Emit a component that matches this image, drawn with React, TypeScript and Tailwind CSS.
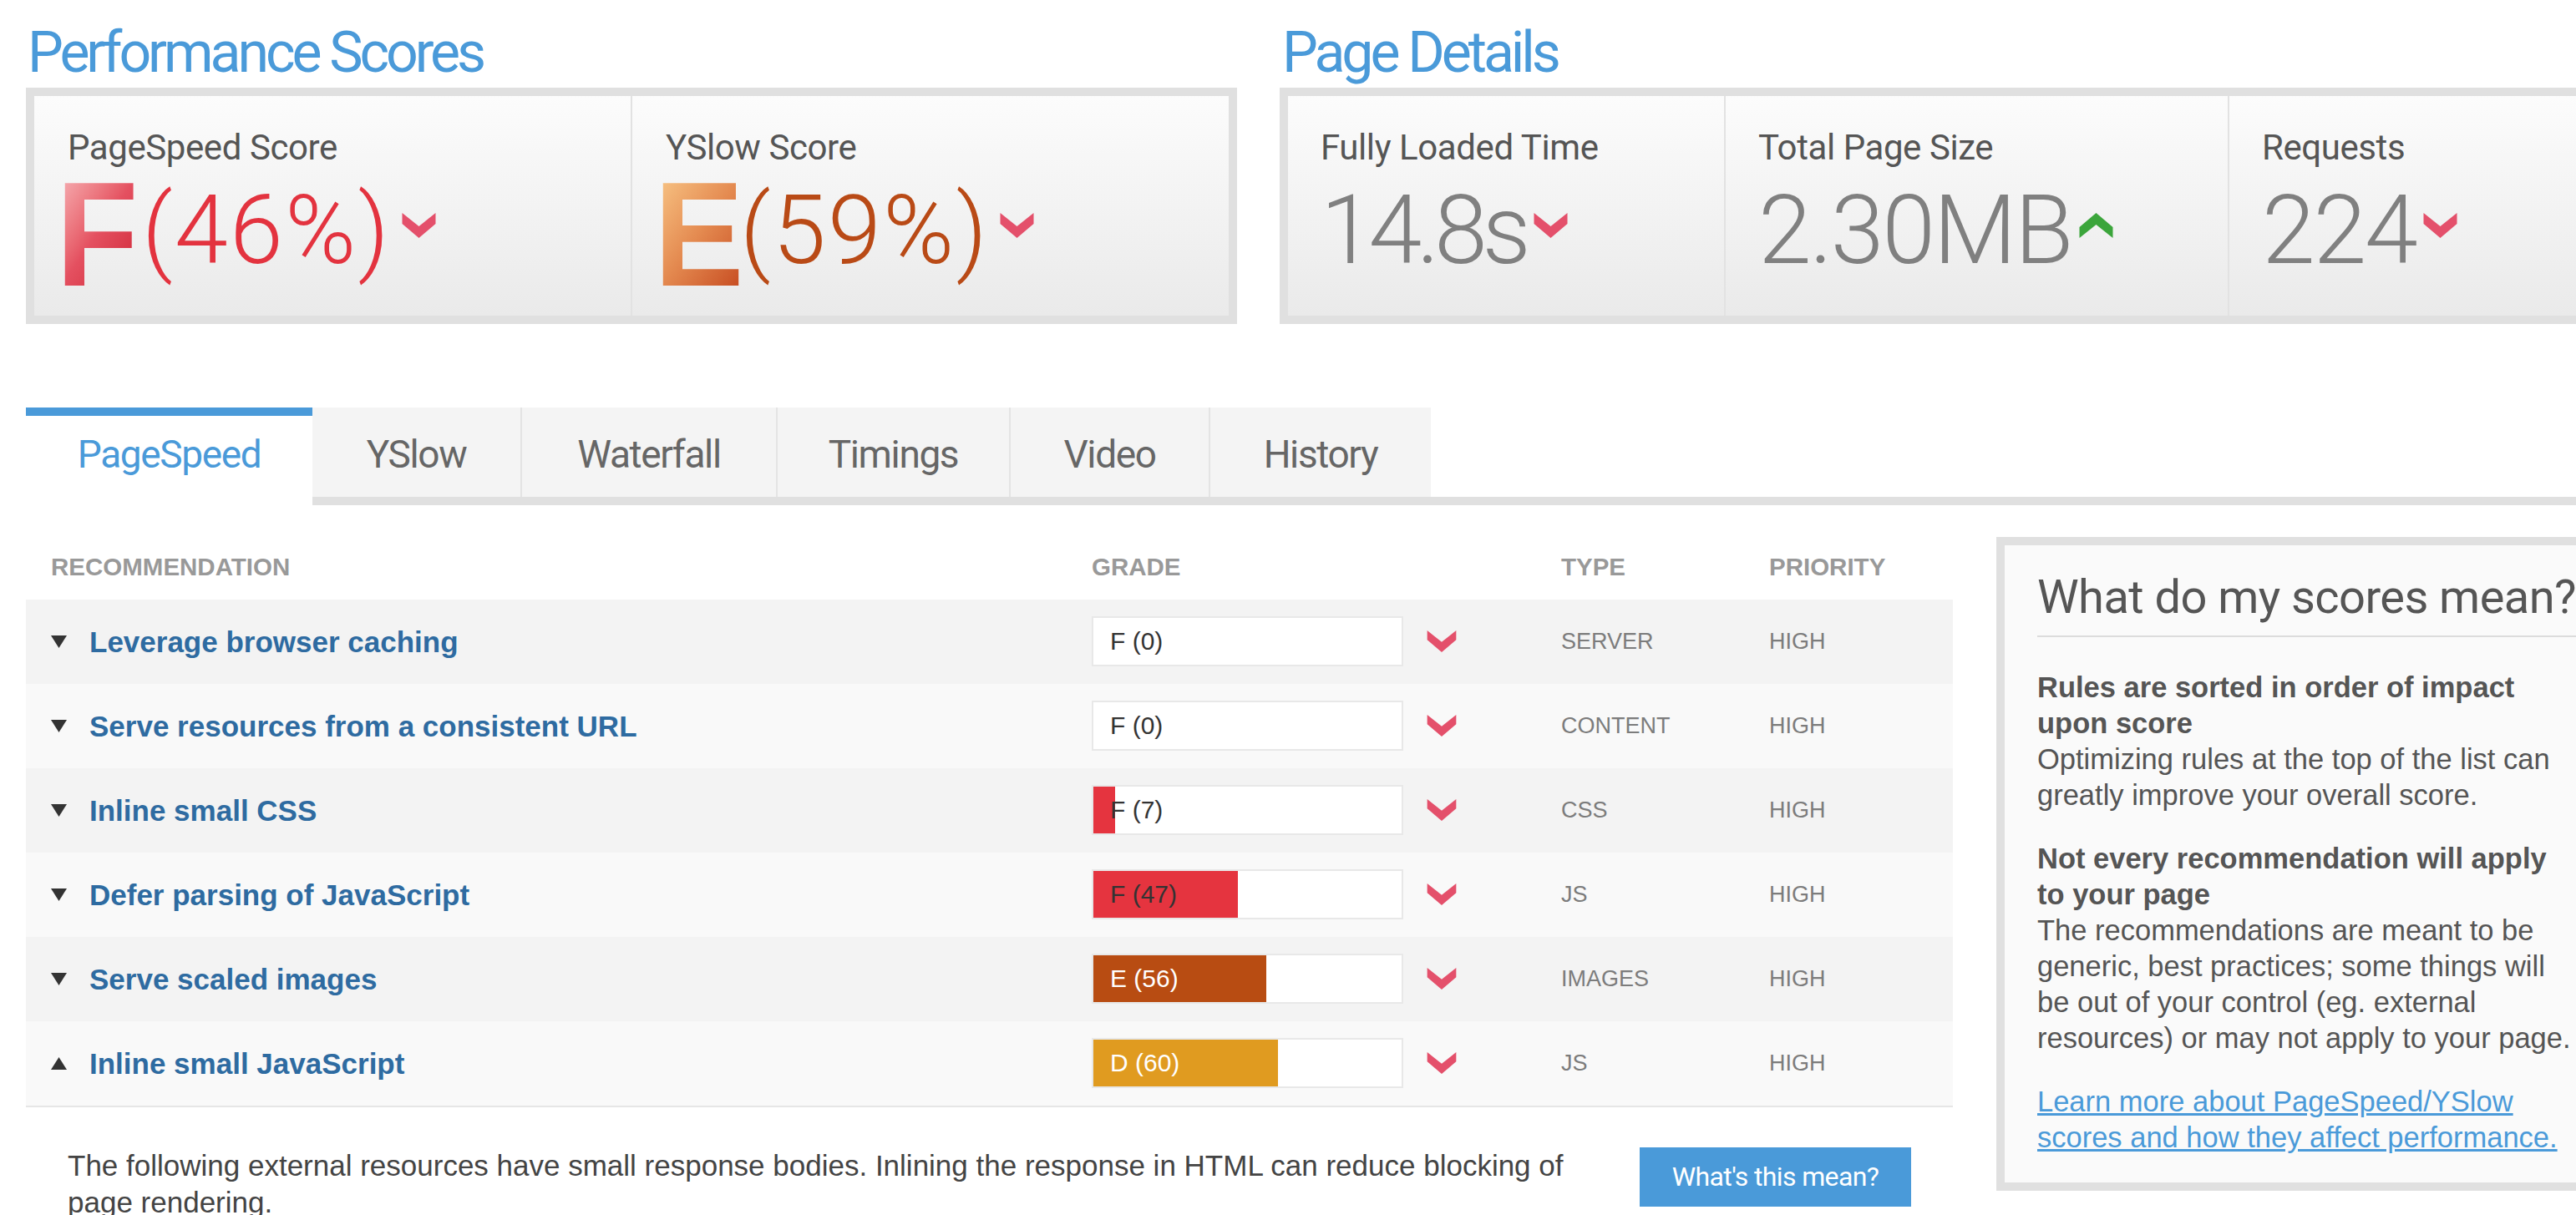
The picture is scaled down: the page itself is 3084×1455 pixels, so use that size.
import React from 'react';

const ROBOTO = "font-['Roboto','Open_Sans',sans-serif]";
const ARIAL = "font-['Liberation_Sans',Arial,sans-serif]";

function Chevron({ up = false, className = '' }: { up?: boolean; className?: string }) {
  return (
    <svg viewBox="0 0 40 30" className={className}>
      {up ? (
        <polygon points="0,30 20,14 40,30 40,17 20,0 0,17" fill="#3ba53b" />
      ) : (
        <polygon points="0,0 20,16 40,0 40,13 20,30 0,13" fill="#e4506b" />
      )}
    </svg>
  );
}

function Triangle({ up = false }: { up?: boolean }) {
  return (
    <svg viewBox="0 0 19 15" className="w-[19px] h-[15px]">
      <polygon points={up ? '0,15 19,15 9.5,0' : '0,0 19,0 9.5,15'} fill="#333" />
    </svg>
  );
}

function ScoreCell({
  label,
  letter,
  value,
  letterClass,
  valueClass,
  divider,
}: {
  label: string;
  letter: string;
  value: string;
  letterClass: string;
  valueClass: string;
  divider?: boolean;
}) {
  return (
    <div className={`flex-1 pl-[40px] pt-[41px] ${divider ? 'border-l-2 border-[#e2e2e2]' : ''}`}>
      <div className={`${ROBOTO} text-[42px] leading-none text-[#555] tracking-[-0.01em]`}>{label}</div>
      <div className="flex items-start mt-[12px]">
        <span className="inline-block w-[103px] -ml-[14px]">
          <span
            className={`${ARIAL} inline-block origin-left scale-x-90 font-bold text-[179px] leading-[140px] bg-clip-text text-transparent ${letterClass}`}
          >
            {letter}
          </span>
        </span>
        <span className={`${ROBOTO} mt-[8px] text-[115px] font-light leading-none tracking-[0.02em] ${valueClass}`}>
          {value}
        </span>
        <Chevron className="mt-[45px] ml-[12px] w-[43px] h-[30px]" />
      </div>
    </div>
  );
}

function DetailCell({
  label,
  value,
  up,
  width,
  tracking,
  divider,
}: {
  label: string;
  value: string;
  up?: boolean;
  width: string;
  tracking: string;
  divider?: boolean;
}) {
  return (
    <div className={`${width} pl-[39px] pt-[41px] ${divider ? 'border-l-2 border-[#e2e2e2]' : ''}`}>
      <div className={`${ROBOTO} text-[42px] leading-none text-[#555] tracking-[-0.01em]`}>{label}</div>
      <div className="flex items-start mt-[20px]">
        <span className={`${ROBOTO} text-[115px] font-light leading-none text-[#808080] ${tracking}`}>{value}</span>
        <Chevron up={up} className="mt-[37px] ml-[8px] w-[43px] h-[30px]" />
      </div>
    </div>
  );
}

const rows = [
  { title: 'Leverage browser caching', grade: 'F (0)', score: 0, fill: '#e5343f', light: false, type: 'SERVER' },
  { title: 'Serve resources from a consistent URL', grade: 'F (0)', score: 0, fill: '#e5343f', light: false, type: 'CONTENT' },
  { title: 'Inline small CSS', grade: 'F (7)', score: 7, fill: '#e5343f', light: false, type: 'CSS' },
  { title: 'Defer parsing of JavaScript', grade: 'F (47)', score: 47, fill: '#e5343f', light: false, type: 'JS' },
  { title: 'Serve scaled images', grade: 'E (56)', score: 56, fill: '#b84c12', light: true, type: 'IMAGES' },
  { title: 'Inline small JavaScript', grade: 'D (60)', score: 60, fill: '#e09b20', light: true, type: 'JS', open: true },
];

const tabs = [
  { name: 'YSlow', w: 'w-[249px]' },
  { name: 'Waterfall', w: 'w-[306px]' },
  { name: 'Timings', w: 'w-[279px]' },
  { name: 'Video', w: 'w-[239px]' },
  { name: 'History', w: 'w-[266px]' },
];

export default function App() {
  return (
    <div className={`w-[3084px] h-[1455px] overflow-hidden bg-white ${ARIAL}`}>
      <div className="w-[3300px] pl-[31px]">
        {/* Scores + details */}
        <div className="flex gap-[51px]">
          <section className="w-[1450px]">
            <h2
              className={`${ROBOTO} h-[105px] pt-[29px] pl-[2px] text-[68px] leading-none tracking-[-0.06em] text-[#4a9ad9]`}
            >
              Performance Scores
            </h2>
            <div className="flex h-[283px] border-[10px] border-[#e0e0e0] bg-gradient-to-b from-[#fcfcfc] to-[#eaeaea]">
              <ScoreCell
                label="PageSpeed Score"
                letter="F"
                value="(46%)"
                letterClass="bg-gradient-to-br from-[#f5b4b9] via-[#e45060] to-[#cc1530]"
                valueClass="text-[#e3333f]"
              />
              <ScoreCell
                label="YSlow Score"
                letter="E"
                value="(59%)"
                letterClass="bg-gradient-to-br from-[#f8c888] via-[#e48a50] to-[#c4461c]"
                valueClass="text-[#b94a16]"
                divider
              />
            </div>
          </section>
          <section className="w-[1700px]">
            <h2
              className={`${ROBOTO} h-[105px] pt-[29px] pl-[3px] text-[68px] leading-none tracking-[-0.06em] text-[#4a9ad9]`}
            >
              Page Details
            </h2>
            <div className="flex h-[283px] border-[10px] border-[#e0e0e0] bg-gradient-to-b from-[#fcfcfc] to-[#eaeaea]">
              <DetailCell label="Fully Loaded Time" value="14.8s" width="w-[522px]" tracking="tracking-[-0.055em]" />
              <DetailCell
                label="Total Page Size"
                value="2.30MB"
                up
                width="w-[603px]"
                tracking="tracking-[-0.02em]"
                divider
              />
              <DetailCell label="Requests" value="224" width="flex-1" tracking="tracking-[-0.02em]" divider />
            </div>
          </section>
        </div>

        {/* Tabs */}
        <div className="flex mt-[100px]">
          <div className="w-[343px] h-[117px] border-t-[10px] border-[#4a9ad9] bg-white flex justify-center pt-[23px]">
            <span className={`${ROBOTO} text-[46px] leading-none tracking-[-0.03em] text-[#4a9ad9]`}>PageSpeed</span>
          </div>
          <div className="flex-1 flex flex-col">
            <div className="flex h-[107px]">
              {tabs.map((t, i) => (
                <div
                  key={t.name}
                  className={`${t.w} bg-[#f4f4f4] flex justify-center pt-[33px] ${i > 0 ? 'border-l-2 border-[#e4e4e4]' : ''}`}
                >
                  <span className={`${ROBOTO} text-[46px] leading-none tracking-[-0.03em] text-[#666]`}>{t.name}</span>
                </div>
              ))}
            </div>
            <div className="h-[10px] bg-[#e0e0e0]" />
          </div>
        </div>

        {/* Table + sidebar */}
        <div className="flex gap-[52px]">
          <div className="w-[2307px]">
            <div className="flex pt-[59px] pb-[24px] text-[29.5px] leading-none font-bold text-[#999]">
              <div className="w-[1276px] pl-[30px]">RECOMMENDATION</div>
              <div className="w-[562px]">GRADE</div>
              <div className="w-[249px]">TYPE</div>
              <div>PRIORITY</div>
            </div>
            <div className="border-b-2 border-[#e6e6e6]">
              {rows.map((r, i) => (
                <div
                  key={r.title}
                  className={`flex items-center h-[101px] ${i % 2 === 0 ? 'bg-[#f3f3f3]' : 'bg-[#f9f9f9]'}`}
                >
                  <div className="w-[1276px] pl-[30px] flex items-center gap-[27px]">
                    <Triangle up={r.open} />
                    <span className="text-[35px] font-bold text-[#2e6ba1] leading-none">{r.title}</span>
                  </div>
                  <div className="relative w-[373px] h-[60px] border-2 border-[#e8e8e8] bg-white flex items-center">
                    <div className="absolute left-0 top-0 bottom-0" style={{ width: `${r.score}%`, background: r.fill }} />
                    <span className={`relative pl-[20px] text-[30px] leading-none ${r.light ? 'text-white' : 'text-[#333]'}`}>
                      {r.grade}
                    </span>
                  </div>
                  <Chevron className="ml-[27px] w-[38px] h-[26px]" />
                  <div className="ml-[124px] w-[249px] text-[27px] text-[#7c7c7c] leading-none">{r.type}</div>
                  <div className="text-[27px] text-[#7c7c7c] leading-none">HIGH</div>
                </div>
              ))}
            </div>
            <div className="flex items-start justify-between pl-[50px] pr-[50px] pt-[48px]">
              <p className="w-[1830px] text-[35px] leading-[44px] text-[#444]">
                The following external resources have small response bodies. Inlining the response in HTML can reduce
                blocking of page rendering.
              </p>
              <button
                className={`${ROBOTO} w-[325px] h-[71px] bg-[#4a9ad9] text-white text-[32px] tracking-[-0.02em] leading-none`}
              >
                What's this mean?
              </button>
            </div>
          </div>

          <aside className="w-[800px] mt-[38px] h-[783px] border-[10px] border-[#e0e0e0] bg-[#fafafa] pl-[39px] pt-[34px]">
            <h3
              className={`${ROBOTO} text-[56px] leading-none tracking-[-0.01em] text-[#555] pb-[18px] border-b-2 border-[#dcdcdc]`}
            >
              What do my scores mean?
            </h3>
            <div className="w-[646px] mt-[39px] text-[34.5px] leading-[43px] text-[#555]">
              <p className="mb-[33px]">
                <b>Rules are sorted in order of impact upon score</b>
                <br />
                Optimizing rules at the top of the list can greatly improve your overall score.
              </p>
              <p className="mb-[33px]">
                <b>Not every recommendation will apply to your page</b>
                <br />
                The recommendations are meant to be generic, best practices; some things will be out of your control
                (eg. external resources) or may not apply to your page.
              </p>
              <a href="#" className="text-[#4a9ad9] underline">
                Learn more about PageSpeed/YSlow scores and how they affect performance.
              </a>
            </div>
          </aside>
        </div>
      </div>
    </div>
  );
}
